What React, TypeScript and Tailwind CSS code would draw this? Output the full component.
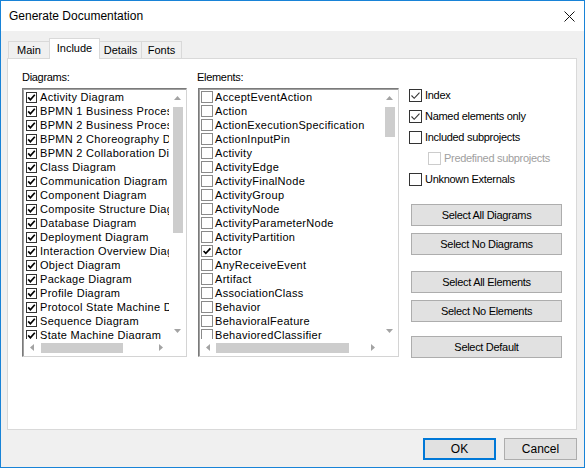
import React from "react";

const diagrams = [
  "Activity Diagram",
  "BPMN 1 Business Process Diagram",
  "BPMN 2 Business Process Diagram",
  "BPMN 2 Choreography Diagram",
  "BPMN 2 Collaboration Diagram",
  "Class Diagram",
  "Communication Diagram",
  "Component Diagram",
  "Composite Structure Diagram",
  "Database Diagram",
  "Deployment Diagram",
  "Interaction Overview Diagram",
  "Object Diagram",
  "Package Diagram",
  "Profile Diagram",
  "Protocol State Machine Diagram",
  "Sequence Diagram",
  "State Machine Diagram",
];

const elements = [
  "AcceptEventAction",
  "Action",
  "ActionExecutionSpecification",
  "ActionInputPin",
  "Activity",
  "ActivityEdge",
  "ActivityFinalNode",
  "ActivityGroup",
  "ActivityNode",
  "ActivityParameterNode",
  "ActivityPartition",
  "Actor",
  "AnyReceiveEvent",
  "Artifact",
  "AssociationClass",
  "Behavior",
  "BehavioralFeature",
  "BehavioredClassifier",
];

function ListCheck({ size, checked, border }: { size: number; checked: boolean; border: string }) {
  return (
    <svg width={size} height={size} viewBox={`0 0 ${size} ${size}`} className="shrink-0">
      <rect x="0.5" y="0.5" width={size - 1} height={size - 1} fill="#fff" stroke={border} />
      {checked && (
        <path
          d={size === 11 ? "M2.2 5.4 L4.4 7.8 L8.8 2.8" : "M2.6 6 L4.8 8.3 L9.4 3.4"}
          fill="none"
          stroke="#000"
          strokeWidth="1.7"
        />
      )}
    </svg>
  );
}

function WinCheck({ checked, disabled }: { checked?: boolean; disabled?: boolean }) {
  return (
    <svg width="13" height="13" viewBox="0 0 13 13" className="shrink-0">
      <rect x="0.5" y="0.5" width="12" height="12" fill="#fff" stroke={disabled ? "#cccccc" : "#333"} />
      {checked && <path d="M2.5 6.5 L5.2 9.3 L10.5 3.6" fill="none" stroke="#333" strokeWidth="1.1" />}
    </svg>
  );
}

function Arrow({ dir }: { dir: "up" | "down" | "left" | "right" }) {
  const d = {
    up: "M0 4 L3.5 0 L7 4Z",
    down: "M0 0 L7 0 L3.5 4Z",
    left: "M4 0 L4 7 L0 3.5Z",
    right: "M0 0 L4 3.5 L0 7Z",
  }[dir];
  const v = dir === "up" || dir === "down";
  return (
    <svg width={v ? 7 : 4} height={v ? 4 : 7} viewBox={v ? "0 0 7 4" : "0 0 4 7"}>
      <path d={d} fill="#a3a3a3" />
    </svg>
  );
}

function ListBox({
  items,
  width,
  variant,
  vThumb,
  hThumb,
}: {
  items: string[];
  width: string;
  variant: "diagram" | "element";
  vThumb: { top: string; height: string };
  hThumb: { left: string; width: string };
}) {
  return (
    <div
      className={`flex h-[269px] ${width} flex-col border border-t-[#7a7a7a] border-l-[#7a7a7a] border-r-[#d4d4d4] border-b-[#d4d4d4] bg-white shadow-[inset_1px_1px_0_#a0a0a0]`}
    >
      <div className="flex min-h-0 flex-1">
        <div className="min-w-0 flex-1 overflow-hidden pt-px">
          {items.map((item) => (
            <div
              key={item}
              className={`flex h-[14px] items-center whitespace-nowrap text-[11px] leading-none tracking-[0.3px] ${
                variant === "diagram" ? "gap-[3px] pl-[3px]" : "gap-[2px] pl-[2px]"
              }`}
            >
              <ListCheck
                size={variant === "diagram" ? 11 : 12}
                checked={variant === "diagram" || item === "Actor"}
                border={variant === "diagram" ? "#333" : "#8a8a8a"}
              />
              <span>{item}</span>
            </div>
          ))}
        </div>
        {/* vertical scrollbar */}
        <div className="flex w-[17px] flex-col items-center">
          <div className="flex h-[17px] items-center justify-center">
            <Arrow dir="up" />
          </div>
          <div className={`w-[10px] shrink-0 bg-[#cdcdcd] ${vThumb.height} ${vThumb.top}`} />
          <div className="flex-1" />
          <div className="flex h-[17px] items-center justify-center">
            <Arrow dir="down" />
          </div>
        </div>
      </div>
      {/* horizontal scrollbar */}
      <div className="flex h-[17px]">
        <div className="flex flex-1 items-center">
          <div className="flex w-[17px] justify-center">
            <Arrow dir="left" />
          </div>
          <div className={`h-[10px] bg-[#cdcdcd] ${hThumb.width} ${hThumb.left}`} />
          <div className="flex-1" />
          <div className="flex w-[17px] justify-center">
            <Arrow dir="right" />
          </div>
        </div>
        <div className="w-[17px]" />
      </div>
    </div>
  );
}

function Option({ label, checked, disabled, indent }: { label: string; checked?: boolean; disabled?: boolean; indent?: boolean }) {
  return (
    <div className={`flex h-[21px] items-center gap-[3px] ${indent ? "pl-[19px]" : ""}`}>
      <WinCheck checked={checked} disabled={disabled} />
      <span className={disabled ? "text-[#a0a0a0]" : "text-black"}>{label}</span>
    </div>
  );
}

function SideButton({ label, className = "" }: { label: string; className?: string }) {
  return (
    <div
      className={`ml-[2px] flex h-[22px] w-[151px] items-center justify-center border border-[#adadad] bg-[#e1e1e1] ${className}`}
    >
      {label}
    </div>
  );
}

export default function App() {
  return (
    <div className="flex h-[468px] w-[585px] flex-col border border-[#1883d7] bg-[#f0f0f0] font-['Liberation_Sans',Arial,sans-serif] text-black">
      {/* title bar */}
      <div className="flex h-[30px] shrink-0 items-center justify-between bg-white pl-[8px] pr-[9px]">
        <span className="text-[12px]">Generate Documentation</span>
        <svg width="11" height="11" viewBox="0 0 11 11">
          <path d="M0.5 0.5 L10.5 10.5 M10.5 0.5 L0.5 10.5" stroke="#111" strokeWidth="1" />
        </svg>
      </div>

      {/* tabs */}
      <div className="relative z-10 ml-[7px] mt-[7px] flex h-[20px] items-end text-[11px]">
        <div className="flex h-[17px] w-[42px] items-center justify-center border border-b-0 border-[#d9d9d9] bg-[#f0f0f0]">
          Main
        </div>
        <div className="-ml-px -mb-px flex h-[21px] w-[51px] items-center justify-center border border-b-0 border-[#d9d9d9] bg-white pb-px">
          Include
        </div>
        <div className="-ml-px flex h-[17px] w-[43px] items-center justify-center border border-b-0 border-[#d9d9d9] bg-[#f0f0f0]">
          Details
        </div>
        <div className="-ml-px flex h-[17px] w-[41px] items-center justify-center border border-b-0 border-[#d9d9d9] bg-[#f0f0f0]">
          Fonts
        </div>
      </div>

      {/* tab panel */}
      <div className="ml-[6px] flex h-[372px] w-[570px] border border-[#d9d9d9] bg-white text-[11px]">
        <div className="ml-[14px] flex flex-col pt-[11px]">
          <div className="mb-[4px] flex h-[14px] items-center tracking-[-0.3px]">Diagrams:</div>
          <ListBox
            items={diagrams}
            width="w-[165px]"
            variant="diagram"
            vThumb={{ top: "mt-[1px]", height: "h-[126px]" }}
            hThumb={{ left: "ml-[1px]", width: "w-[82px]" }}
          />
        </div>
        <div className="ml-[11px] flex flex-col pt-[11px]">
          <div className="mb-[4px] -ml-px flex h-[14px] items-center tracking-[-0.3px]">Elements:</div>
          <ListBox
            items={elements}
            width="w-[201px]"
            variant="element"
            vThumb={{ top: "mt-[1px]", height: "h-[30px]" }}
            hThumb={{ left: "ml-0", width: "w-[133px]" }}
          />
        </div>
        <div className="ml-[10px] flex flex-col pt-[26px] tracking-[-0.3px]">
          <Option label="Index" checked />
          <Option label="Named elements only" checked />
          <Option label="Included subprojects" />
          <Option label="Predefined subprojects" disabled indent />
          <Option label="Unknown Externals" />
          <SideButton label="Select All Diagrams" className="mt-[14px]" />
          <SideButton label="Select No Diagrams" className="mt-[7px]" />
          <SideButton label="Select All Elements" className="mt-[16px]" />
          <SideButton label="Select No Elements" className="mt-[7px]" />
          <SideButton label="Select Default" className="mt-[14px]" />
        </div>
      </div>

      {/* dialog buttons */}
      <div className="mr-[7px] mt-[8px] flex justify-end gap-[8px] text-[12px]">
        <div className="flex h-[22px] w-[73px] items-center justify-center border-2 border-[#0078d7] bg-[#e1e1e1]">
          OK
        </div>
        <div className="flex h-[22px] w-[73px] items-center justify-center border border-[#adadad] bg-[#e1e1e1]">
          Cancel
        </div>
      </div>
    </div>
  );
}
